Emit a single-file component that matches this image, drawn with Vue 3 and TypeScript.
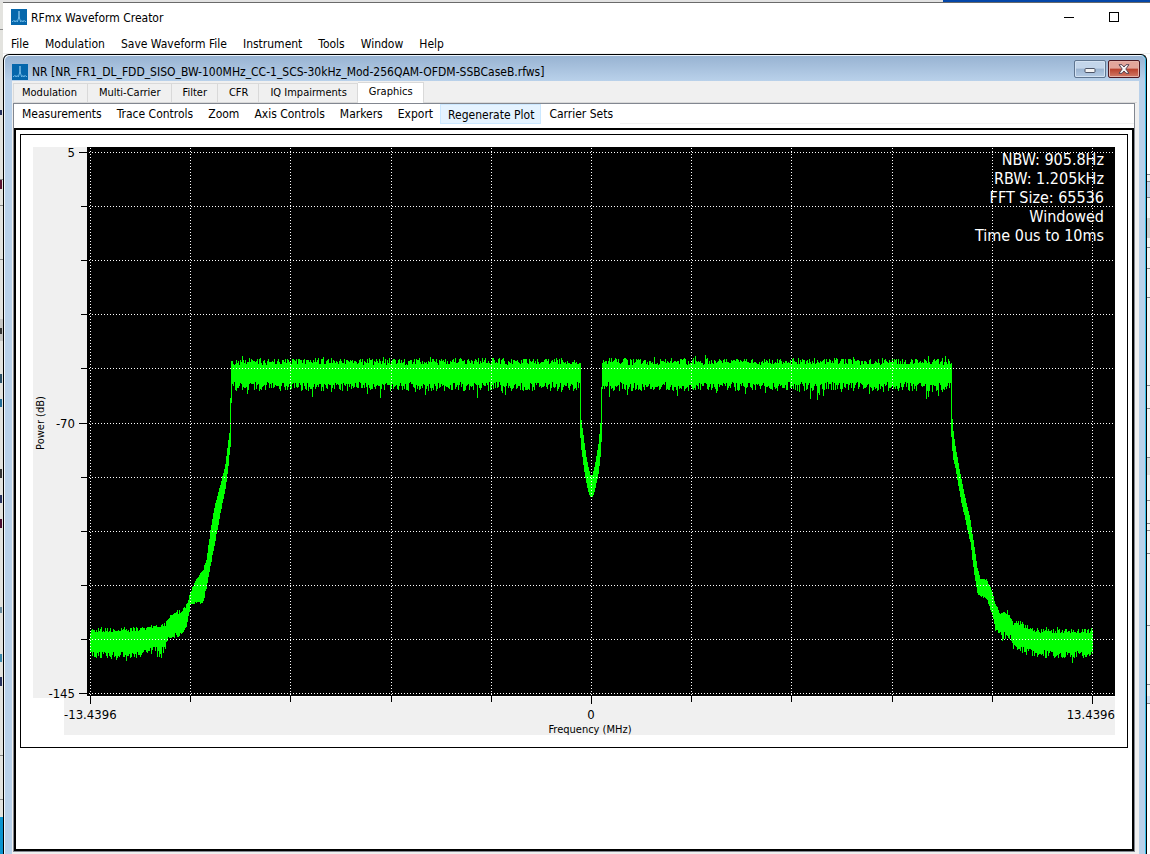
<script setup lang="ts">
import { ref } from 'vue'

const mainMenu: string[] = ['File', 'Modulation', 'Save Waveform File', 'Instrument', 'Tools', 'Window', 'Help']
const tabs: string[] = ['Modulation', 'Multi-Carrier', 'Filter', 'CFR', 'IQ Impairments', 'Graphics']
const plotMenu: string[] = ['Measurements', 'Trace Controls', 'Zoom', 'Axis Controls', 'Markers', 'Export', 'Regenerate Plot', 'Carrier Sets']
const readout: string[] = ['NBW: 905.8Hz', 'RBW: 1.205kHz', 'FFT Size: 65536', 'Windowed', 'Time 0us to 10ms']

const activeTab = ref('Graphics')
const highlighted = ref('Regenerate Plot')

// Grid line positions in chart units
const gridX: number[] = [57, 157, 257, 358, 458, 558, 658, 758, 859, 959, 1059]
const gridY: number[] = [5, 59, 113, 167, 221, 276, 330, 384, 438, 492, 546]
const yLabels = [
  { y: 5, text: '5' },
  { y: 276, text: '-70' },
  { y: 546, text: '-145' },
]

// Envelope knots: x, top, bottom, noise amplitude
type Knot = [number, number, number, number]
const knots: Knot[] = [
  [57, 485, 506, 5], [67, 484, 506, 5], [97, 484, 506, 5], [112, 483, 503, 5], [122, 480, 501, 5],
  [132, 479, 499, 5], [134, 473, 493, 4], [137, 470, 487, 4], [142, 467, 487, 4], [148, 465, 486, 4],
  [153, 458, 480, 2], [154, 456, 473, 2], [157, 446, 458, 1], [162, 434, 455, 1], [167, 427, 455, 2],
  [170, 423, 453, 2], [173, 413, 441, 1], [177, 384, 419, 1], [181, 361, 398, 1], [187, 338, 366, 1],
  [192, 318, 342, 1], [195, 293, 319, 0], [196, 286, 308, 0], [197, 251, 300, 0], [198, 214, 256, 0],
  [198.5, 216, 237, 6], [546.5, 216, 237, 6],
  [547, 216, 291, 0], [548, 273, 303, 0], [551, 296, 325, 0], [553, 310, 336, 0], [555, 320, 345, 0],
  [557, 328, 350, 0], [559, 328, 350, 0], [561, 320, 345, 0], [563, 309, 336, 0], [565, 297, 327, 0],
  [567, 276, 310, 0], [568, 240, 295, 0], [568.5, 216, 290, 0], [569, 216, 237, 6],
  [917, 216, 237, 6], [917.5, 216, 290, 0], [918, 216, 290, 0], [919, 272, 304, 0], [920, 284, 313, 0],
  [922, 299, 321, 0], [924, 310, 333, 0], [927, 328, 350, 1], [932, 352, 373, 1], [937, 373, 395, 1],
  [941, 401, 428, 1], [944, 421, 446, 1], [947, 432, 449, 1], [953, 433, 451, 2], [956, 438, 459, 1],
  [959, 446, 468, 1], [962, 458, 482, 2], [967, 468, 486, 5], [972, 467, 486, 5], [977, 470, 487, 5],
  [980, 477, 499, 4], [987, 477, 501, 5], [992, 481, 502, 5], [1002, 484, 504, 5], [1017, 485, 505, 5],
  [1059, 485, 506, 5],
]

function buildTrace(): string {
  let seed = 20471
  const rnd = (): number => {
    seed = (seed * 1664525 + 1013904223) % 4294967296
    return seed / 4294967296
  }
  let d = ''
  for (let x = 57; x <= 1059; x++) {
    let i = 0
    while (i < knots.length - 2 && knots[i + 1][0] <= x) i++
    const a = knots[i]
    const b = knots[i + 1]
    const t = Math.min(1, (x - a[0]) / (b[0] - a[0]))
    const amp = a[3]
    let top = a[1] + (b[1] - a[1]) * t + amp * 0.3 - rnd() * amp * 1.1
    let bottom = a[2] + (b[2] - a[2]) * t - amp * 0.3 + rnd() * amp * 1.5
    if (amp > 3 && rnd() < 0.08) top -= rnd() * 4
    if (amp > 3 && rnd() < 0.1) bottom += rnd() * 9
    top = Math.round(top)
    bottom = Math.round(bottom)
    d += `M${x} ${top}h1v${bottom - top}h-1z`
  }
  return d
}
const trace = buildTrace()

// Edges of the desktop windows lying behind the application
const rightEdges: number[] = [174, 181, 197, 247, 268, 297, 385, 408, 457, 500, 523, 530, 553, 625, 684, 703]
const leftEdges: number[] = [27, 177, 203, 257, 753, 797]
const leftMarks = [
  { y: 108, h: 5, c: '#26315e' }, { y: 178, h: 9, c: '#5a1030' }, { y: 326, h: 6, c: '#333333' },
  { y: 372, h: 9, c: '#2a5068' }, { y: 397, h: 8, c: '#1f6a96' }, { y: 467, h: 9, c: '#333333' },
  { y: 493, h: 8, c: '#26315e' }, { y: 517, h: 9, c: '#4a0a30' }, { y: 605, h: 6, c: '#6a8ca0' },
  { y: 652, h: 8, c: '#3a88ac' }, { y: 675, h: 9, c: '#26315e' },
]
</script>

<template>
  <div class="desktop">
    <div class="desktop-top"><span class="behind"></span><span class="behind-active"></span></div>
    <svg class="desktop-left" width="3" height="852" viewBox="0 0 3 852" shape-rendering="crispEdges" aria-hidden="true">
      <rect width="3" height="852" fill="#e3e3df" />
      <rect y="317" width="3" height="22" fill="#c6c6c4" />
      <rect v-for="y in leftEdges" :key="y" :y="y" width="3" height="1" fill="#8a8a8a" />
      <rect v-for="m in leftMarks" :key="m.y" :y="m.y" width="2" :height="m.h" :fill="m.c" />
      <rect y="815" width="3" height="37" fill="#0a94cf" />
    </svg>

    <main class="app-window">
      <header class="app-title">
        <svg class="logo" width="16" height="16" viewBox="0 0 16 16" aria-hidden="true">
          <rect width="16" height="16" fill="#0567ac" />
          <path d="M8 2v8" stroke="#9fd3f2" stroke-width="1.2" fill="none" />
          <path d="M1 12.500h1l1-1.200 1 1.700 1.200-1.500L6.300 13 7.400 9.500 8 8l.6 1.500L9.700 13l1.100-1.500L12 13l1-1.700 1 1.200h1" stroke="#6db8e6" stroke-width="1" fill="none" />
        </svg>
        <h1>RFmx Waveform Creator</h1>
        <button class="sys" aria-label="Minimize">
          <svg width="11" height="11" viewBox="0 0 11 11" shape-rendering="crispEdges"><rect y="5" width="10" height="1" /></svg>
        </button>
        <button class="sys" aria-label="Maximize">
          <svg width="11" height="11" viewBox="0 0 11 11" shape-rendering="crispEdges"><path d="M.5.5h9v9h-9z" fill="none" stroke="#000" /></svg>
        </button>
      </header>

      <nav class="menu main-menu" aria-label="Application">
        <button v-for="m in mainMenu" :key="m">{{ m }}</button>
      </nav>

      <div class="workspace">
        <section class="child">
          <header class="child-title">
            <svg class="logo" width="16" height="16" viewBox="0 0 16 16" aria-hidden="true">
              <rect width="16" height="16" fill="#0567ac" />
              <path d="M8 2v8" stroke="#9fd3f2" stroke-width="1.2" fill="none" />
              <path d="M1 12.500h1l1-1.200 1 1.700 1.200-1.500L6.300 13 7.400 9.500 8 8l.6 1.500L9.700 13l1.100-1.500L12 13l1-1.700 1 1.200h1" stroke="#6db8e6" stroke-width="1" fill="none" />
            </svg>
            <h2>NR [NR_FR1_DL_FDD_SISO_BW-100MHz_CC-1_SCS-30kHz_Mod-256QAM-OFDM-SSBCaseB.rfws]</h2>
            <button class="aero" aria-label="Minimize document">
              <svg width="12" height="10" viewBox="0 0 12 10"><rect x="1" y="4.5" width="10" height="4" rx="1" fill="#f4f4f4" stroke="#4d5568" /></svg>
            </button>
            <button class="aero close" aria-label="Close document">
              <svg width="12" height="10" viewBox="0 0 12 10"><path d="M1 .7h3L6 3l2-2.300h3L7.800 5 11 9.300H8L6 7 4 9.300H1L4.200 5z" fill="#f6f6f6" stroke="#564352" /></svg>
            </button>
          </header>

          <div class="child-body">
            <div class="tabs" role="tablist">
              <button
                v-for="t in tabs"
                :key="t"
                role="tab"
                :class="{ active: t === activeTab }"
                :aria-selected="t === activeTab"
                @click="activeTab = t"
              >{{ t }}</button>
            </div>

            <div class="panel">
              <nav class="menu plot-menu" aria-label="Plot">
                <button
                  v-for="m in plotMenu"
                  :key="m"
                  :class="{ hot: m === highlighted }"
                  @mouseenter="highlighted = m"
                >{{ m }}</button>
              </nav>

              <div class="canvas">
                <figure class="plot">
                  <svg class="chart" viewBox="0 0 1082 588" role="img" aria-label="Power spectrum">
                    <g shape-rendering="crispEdges">
                      <rect width="54" height="551" fill="#f0f0f0" />
                      <rect x="31" y="550" width="1051" height="38" fill="#f0f0f0" />
                      <rect x="54" width="1028" height="549" fill="#000" />
                      <rect
                        v-for="(y, i) in gridY"
                        :key="'ty' + y"
                        :x="i % 5 === 0 ? 46 : 48"
                        :y="y"
                        :width="i % 5 === 0 ? 9 : 7"
                        height="1"
                      />
                      <rect
                        v-for="(x, i) in gridX"
                        :key="'tx' + x"
                        :x="x"
                        y="548"
                        width="1"
                        :height="i % 5 === 0 ? 9 : 7"
                      />
                      <path :d="trace" fill="#00ff00" />
                      <g stroke="#fff" stroke-dasharray="1 2">
                        <path v-for="y in gridY" :key="'gy' + y" :d="`M56 ${y + 0.5}H1081`" />
                        <path v-for="x in gridX" :key="'gx' + x" :d="`M${x + 0.5} 1V548`" />
                      </g>
                    </g>
                    <g class="tick" text-anchor="end">
                      <text v-for="l in yLabels" :key="l.text" x="42" :y="l.y + 5">{{ l.text }}</text>
                      <text x="1082" y="572">13.4396</text>
                    </g>
                    <text class="tick" x="31" y="572">-13.4396</text>
                    <text class="tick" x="558" y="572" text-anchor="middle">0</text>
                    <text class="axis" x="557" y="586" text-anchor="middle">Frequency (MHz)</text>
                    <text class="axis" transform="translate(11 276) rotate(-90)" text-anchor="middle">Power (dB)</text>
                    <g class="readout" text-anchor="end">
                      <text v-for="(r, i) in readout" :key="r" x="1071" :y="18 + i * 19">{{ r }}</text>
                    </g>
                  </svg>
                </figure>
              </div>
            </div>
          </div>
        </section>

        <svg class="desktop-right" width="3" height="798" viewBox="0 54 3 798" shape-rendering="crispEdges" aria-hidden="true">
          <rect y="54" width="3" height="120" fill="#fff" />
          <rect y="174" width="3" height="530" fill="#f3f3f3" />
          <rect y="181" width="3" height="16" fill="#c5d5ea" />
          <rect y="218" width="3" height="20" fill="#cfcfcf" />
          <rect y="457" width="3" height="18" fill="#dedede" />
          <rect y="696" width="3" height="7" fill="#d5e2f3" />
          <rect y="704" width="3" height="148" fill="#fff" />
          <rect v-for="y in rightEdges" :key="y" :y="y" width="3" height="1" fill="#84868c" />
        </svg>
      </div>
    </main>
  </div>
</template>

<style>
html,
body {
  margin: 0;
  background: #fff;
}
</style>

<style scoped>
* {
  box-sizing: border-box;
}

.desktop {
  display: grid;
  grid-template-columns: 3px minmax(0, 1fr);
  grid-template-rows: 2px 1fr;
  min-height: 100vh;
  background: #e3e3df;
  color: #000;
  font-family: 'DejaVu Sans Condensed', 'DejaVu Sans', sans-serif;
  font-size: 12px;
  line-height: 16px;
}

.desktop-top {
  grid-column: 1 / -1;
  display: flex;
}

.behind {
  flex: 82;
  background: #e2e2e2;
}

.behind-active {
  flex: 18;
  background: #0446a8;
}

.desktop-left,
.desktop-right {
  display: block;
}

button {
  margin: 0;
  padding: 0;
  border: 0;
  background: transparent;
  color: inherit;
  font: inherit;
  white-space: nowrap;
}

h1,
h2 {
  flex: 1;
  margin: 0;
  font-size: 12px;
  font-weight: 400;
  line-height: 16px;
  white-space: nowrap;
}

.logo {
  flex: none;
  margin-right: 4px;
}

.app-window {
  display: flex;
  flex-direction: column;
  min-width: 0;
  border-top: 1px solid #6a6a6a;
  background: #fff;
}

.app-title {
  display: flex;
  align-items: center;
  height: 28px;
  padding-left: 8px;
  padding-right: 13px;
}

.app-title h1 {
  padding-top: 1px;
}

.sys {
  display: flex;
  align-items: center;
  justify-content: center;
  width: 45px;
  height: 28px;
}

.menu {
  display: flex;
}

.menu button {
  padding: 0 8px;
}

.main-menu {
  height: 23px;
  border-bottom: 1px solid #f0f0f0;
}

.main-menu button {
  height: 22px;
  padding-top: 3px;
}

.workspace {
  flex: 1;
  display: flex;
}

.child {
  flex: 1;
  display: flex;
  flex-direction: column;
  min-width: 0;
  border: 1px solid #000;
  border-bottom: 0;
  border-radius: 6px 6px 0 0;
  background: #b9d1ea;
  box-shadow: inset -1px 0 #35bfe8, inset 1px 1px #eef5fc;
}

.child-title {
  display: flex;
  align-items: flex-end;
  height: 25px;
  margin: 1px 1px 0;
  padding: 0 5px 1px 7px;
  border-radius: 5px 5px 0 0;
  background: linear-gradient(#98b3d2, #b9d1ea);
}

.child-title h2 {
  overflow: hidden;
}

.aero {
  display: flex;
  align-items: center;
  justify-content: center;
  align-self: flex-start;
  width: 32px;
  height: 18px;
  margin-top: 4px;
  border: 1px solid #5f7590;
  border-radius: 2px;
  background: linear-gradient(#c3d5ea 0 45%, #9bb4d1 50%, #b5cbe4);
  box-shadow: inset 0 0 0 1px #d4e2f2;
}

.aero.close {
  margin-left: 2px;
  border-color: #4c1722;
  background: linear-gradient(#e3a59b 0 45%, #b9402c 50%, #d17a68);
  box-shadow: inset 0 0 0 1px #e5b3aa;
}

.child-body {
  flex: 1;
  display: flex;
  flex-direction: column;
  min-width: 0;
  margin: 0 7px 0 8px;
  padding: 0 4px 2px 1px;
  background: #f0f0f0;
}

.tabs {
  display: flex;
  align-items: flex-end;
  height: 22px;
  margin-right: -2px;
  border-bottom: 1px solid #d9d9d9;
  font-size: 11px;
}

.tabs button {
  height: 19px;
  padding: 0 10px 0 11px;
  border: 1px solid #d9d9d9;
  border-left-width: 0;
  border-bottom: 0;
}

.tabs button:first-child {
  padding-left: 8px;
  border-left-width: 1px;
}

.tabs button.active {
  height: 21px;
  margin-bottom: -1px;
  padding-bottom: 2px;
  background: #fff;
}

.panel {
  flex: 1;
  display: flex;
  flex-direction: column;
  min-width: 0;
  border: 1px solid #828790;
  background: #fff;
}

.plot-menu {
  height: 24px;
  background: linear-gradient(#f0f0f0, #f0f0f0) 0 19px / 100% 1px no-repeat;
}

.plot-menu button {
  height: 20px;
  padding: 1px 7px 0 8px;
  border-bottom: 1px solid #fff;
}

.plot-menu button.hot {
  background: #e5f3ff;
  box-shadow: inset 0 0 0 1px #cce8ff;
  border-bottom: 0;
}

.canvas {
  flex: 1;
  border: 2px solid #000;
  padding: 4px;
}

.plot {
  margin: 0;
  padding: 12px;
  border: 1px solid #000;
}

.chart {
  display: block;
  width: 100%;
  height: auto;
  overflow: visible;
}

.tick {
  font-size: 13px;
}

.axis {
  font-size: 11px;
}

.readout {
  font-size: 16px;
  fill: #fff;
}
</style>
